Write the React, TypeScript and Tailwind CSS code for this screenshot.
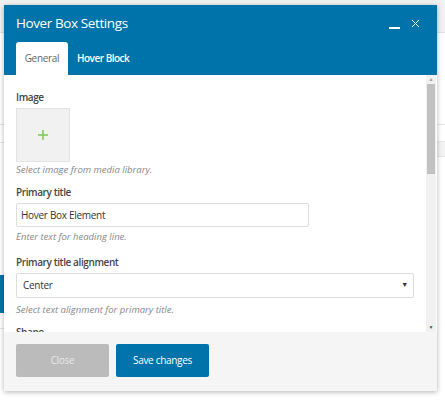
import { X } from 'lucide-react'

const font = { fontFamily: '"Open Sans", "Noto Sans", sans-serif' }

function Field({ label, help, gap, children }: { label: string; help?: string; gap: string; children: React.ReactNode }) {
  return (
    <div className={`flex flex-col ${gap}`}>
      <div className="text-[10px] font-semibold tracking-[-0.4px] text-[#444] leading-[16px]">{label}</div>
      {children}
      {help && <div className="text-[9.5px] italic text-[#888] leading-[14px]">{help}</div>}
    </div>
  )
}

export default function App() {
  return (
    <div className="relative w-[445px] h-[400px] overflow-hidden bg-white" style={font}>
      {/* page behind the dialog */}
      <div className="flex flex-col h-full">
        <div className="h-[33px] bg-[#f1f1f1] border-b border-[#e2e2e2]" />
        <div className="flex-1 flex">
          <div className="w-[4px] flex flex-col">
            <div className="h-[92px] border-b border-[#e5e5e5]" />
            <div className="h-[18px] border-b border-[#e5e5e5]" />
            <div className="h-[132px]" />
            <div className="h-[38px] bg-[#0073aa]" />
            <div className="h-[16px] border-b border-[#e5e5e5]" />
          </div>
          <div className="flex-1" />
          <div className="w-[8px] flex flex-col">
            <div className="h-[92px] border-b border-[#e5e5e5]" />
            <div className="h-[16px]" />
            <div className="h-[16px] bg-[#f3f3f3] border-y border-[#e5e5e5]" />
          </div>
        </div>
      </div>

      {/* dialog */}
      <div className="absolute left-[4px] top-[5px] w-[433px] h-[386px] flex flex-col bg-white shadow-[0_1px_5px_rgba(0,0,0,0.3)]">
        <div className="bg-[#0073aa] px-[12px] flex flex-col">
          <div className="h-[37px] flex items-center justify-between">
            <span className="text-[13.5px] tracking-[-0.4px] text-white leading-none">Hover Box Settings</span>
            <div className="flex items-end gap-[9px] pr-[3px]">
              <div className="w-[11px] h-[2px] bg-white mb-[1px]" />
              <X size={13} strokeWidth={1.8} className="text-white" />
            </div>
          </div>
          <div className="h-[33px] flex items-end gap-[1px]">
            <div className="w-[52px] h-[33px] bg-white rounded-t-[3px] flex items-center justify-center text-[10px] tracking-[-0.3px] text-[#666]">General</div>
            <div className="h-[33px] px-[8px] flex items-center text-[10px] font-semibold tracking-[-0.5px] text-white">Hover Block</div>
          </div>
        </div>

        <div className="h-[257px] flex">
          <div className="flex-1 overflow-hidden px-[12px] pt-[14px] flex flex-col">
            <Field label="Image" help="Select image from media library." gap="">
              <div className="mt-[3px] mb-[1px] w-[54px] h-[54px] bg-[#f1f1f1] border border-[#e3e3e3] flex items-center justify-center">
                <svg width="10" height="10" viewBox="0 0 10 10">
                  <path d="M5 0v10M0 5h10" stroke="#7cc94f" strokeWidth="1.5" />
                </svg>
              </div>
            </Field>
            <Field label="Primary title" help="Enter text for heading line." gap="mt-[7px]">
              <div className="mt-[3px] mb-[3px] w-[293px] h-[24px] border border-[#ddd] rounded-[2px] flex items-center px-[4px] text-[10px] tracking-[-0.3px] text-[#333]">
                Hover Box Element
              </div>
            </Field>
            <Field label="Primary title alignment" help="Select text alignment for primary title." gap="mt-[10px]">
              <div className="mt-[3px] mb-[5px] w-[398px] h-[25px] border border-[#ddd] rounded-[2px] flex items-center justify-between pl-[6px] pr-[5px] text-[10px] tracking-[-0.3px] text-[#333]">
                <span>Center</span>
                <span className="text-[7px] text-[#333]">▼</span>
              </div>
            </Field>
            <Field label="Shape" gap="mt-[7px]">
              <div />
            </Field>
          </div>
          <div className="w-[10px] bg-[#f1f1f1] flex flex-col items-center mr-[1px]">
            <span className="text-[5px] leading-[9px] text-[#a3a3a3]">▲</span>
            <div className="w-[8px] h-[90px] bg-[#c1c1c1]" />
            <div className="flex-1" />
            <span className="text-[5px] leading-[9px] text-[#505050]">▼</span>
          </div>
        </div>

        <div className="flex-1 bg-[#f5f5f5] px-[12px] pt-[12px] flex gap-[7px] items-start">
          <div className="w-[93px] h-[33px] bg-[#bbb] rounded-[2px] flex items-center justify-center text-[10px] tracking-[-0.3px] text-[#e8e8e8]">Close</div>
          <div className="w-[93px] h-[33px] bg-[#0073aa] rounded-[2px] flex items-center justify-center text-[10px] tracking-[-0.3px] text-white">Save changes</div>
        </div>
      </div>
    </div>
  )
}
